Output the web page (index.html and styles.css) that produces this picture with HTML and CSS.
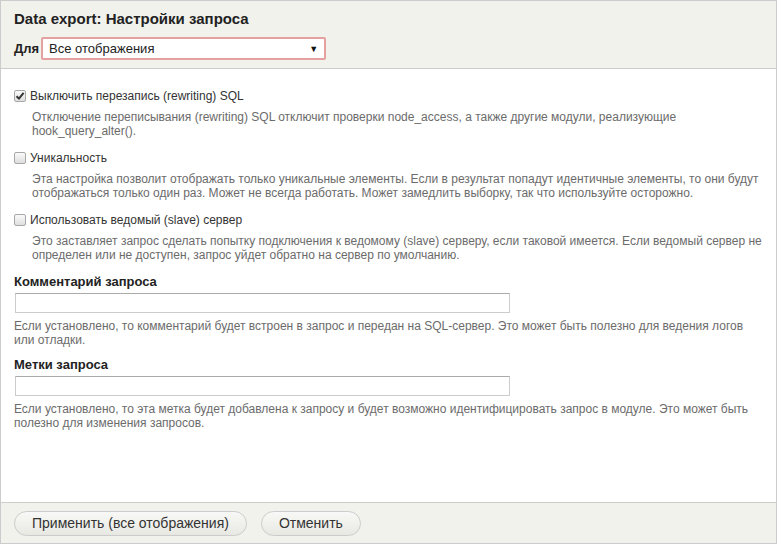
FILE: index.html
```html
<!DOCTYPE html>
<html lang="ru">
<head>
<meta charset="utf-8">
<title>Data export: Настройки запроса</title>
<link rel="stylesheet" href="styles.css">
</head>
<body>
<div class="dialog">
  <div class="head">
    <h1 class="title">Data export: Настройки запроса</h1>
    <div class="for-row">
      <label class="for-label">Для</label>
      <div class="select">
        <span>Все отображения</span>
        <span class="arrow">&#9660;</span>
      </div>
    </div>
  </div>
  <div class="body">
    <div class="check-item">
      <label class="check"><span class="cb"><svg width="10" height="10" viewBox="0 0 10 10"><path d="M1.5 5.2 L4 7.6 L8.6 1.8" fill="none" stroke="#333" stroke-width="2"/></svg></span>Выключить перезапись (rewriting) SQL</label>
      <div class="desc desc-indent">Отключение переписывания (rewriting) SQL отключит проверки node_access, а также другие модули, реализующие hook_query_alter().</div>
    </div>
    <div class="check-item">
      <label class="check"><span class="cb"></span>Уникальность</label>
      <div class="desc desc-indent">Эта настройка позволит отображать только уникальные элементы. Если в результат попадут идентичные элементы, то они будут отображаться только один раз. Может не всегда работать. Может замедлить выборку, так что используйте осторожно.</div>
    </div>
    <div class="check-item">
      <label class="check"><span class="cb"></span>Использовать ведомый (slave) сервер</label>
      <div class="desc desc-indent">Это заставляет запрос сделать попытку подключения к ведомому (slave) серверу, если таковой имеется. Если ведомый сервер не определен или не доступен, запрос уйдет обратно на сервер по умолчанию.</div>
    </div>
    <div class="text-item">
      <label class="field-label">Комментарий запроса</label>
      <div class="text-input"></div>
      <div class="desc">Если установлено, то комментарий будет встроен в запрос и передан на SQL-сервер. Это может быть полезно для ведения логов или отладки.</div>
    </div>
    <div class="text-item">
      <label class="field-label">Метки запроса</label>
      <div class="text-input"></div>
      <div class="desc">Если установлено, то эта метка будет добавлена к запросу и будет возможно идентифицировать запрос в модуле. Это может быть полезно для изменения запросов.</div>
    </div>
  </div>
  <div class="foot">
    <button class="btn">Применить (все отображения)</button>
    <button class="btn">Отменить</button>
  </div>
</div>
</body>
</html>
```

FILE: styles.css
```css
html, body {
  margin: 0;
  padding: 0;
  background: #fff;
}
body {
  font-family: "Liberation Sans", Arial, sans-serif;
  color: #333;
}
.dialog {
  width: 775px;
  height: 542px;
  border: 1px solid #ccc;
  display: flex;
  flex-direction: column;
}
.head {
  background: #f2f2ed;
  border-bottom: 1px solid #ccc;
  padding: 9px 13px 0 13px;
  height: 58px;
}
.title {
  margin: 0;
  font-size: 15px;
  font-weight: bold;
  color: #222;
  line-height: 18px;
}
.for-row {
  display: flex;
  align-items: center;
  margin-top: 9px;
}
.for-label {
  font-weight: bold;
  font-size: 13px;
  color: #222;
  margin-right: 2px;
}
.select {
  width: 269px;
  height: 19px;
  border: 2px solid #e5a0a0;
  border-radius: 2px;
  background: #fff;
  padding: 0 6px;
  display: flex;
  align-items: center;
  justify-content: space-between;
  font-size: 13px;
  color: #222;
}
.arrow {
  font-size: 9px;
  color: #111;
}
.body {
  flex: 1;
  padding: 20px 13px 0 13px;
  background: #fff;
}
.check-item {
  margin-bottom: 13px;
}
.check {
  display: flex;
  align-items: center;
  font-size: 12px;
  color: #333;
  line-height: 14px;
}
.cb {
  box-sizing: border-box;
  width: 12px;
  height: 12px;
  margin: 0 4px 0 0;
  border: 1px solid #a8a8a8;
  border-radius: 2px;
  background: linear-gradient(#fafafa, #dedede);
  display: flex;
  align-items: center;
  justify-content: center;
  flex: none;
}
.desc {
  font-size: 12px;
  line-height: 14px;
  color: #6b6b6b;
}
.desc-indent {
  margin-top: 7px;
  padding-left: 18px;
}
.text-item {
  margin-bottom: 11px;
}
.field-label {
  display: block;
  font-weight: bold;
  font-size: 13px;
  color: #222;
  line-height: 14px;
}
.text-input {
  width: 493px;
  height: 18px;
  border: 1px solid #ccc;
  border-top-color: #aaa;
  margin: 4px 0 6px 1px;
  background: #fff;
}
.foot {
  background: #f2f2ed;
  border-top: 1px solid #ccc;
  height: 40px;
  display: flex;
  align-items: center;
  gap: 14px;
  padding: 0 13px;
}
.btn {
  font-family: "Liberation Sans", Arial, sans-serif;
  font-size: 14px;
  color: #333;
  height: 25px;
  padding: 0 17px;
  border: 1px solid #ccc;
  border-radius: 13px;
  background: linear-gradient(#f8f8f6, #e8e8e3);
}
```
